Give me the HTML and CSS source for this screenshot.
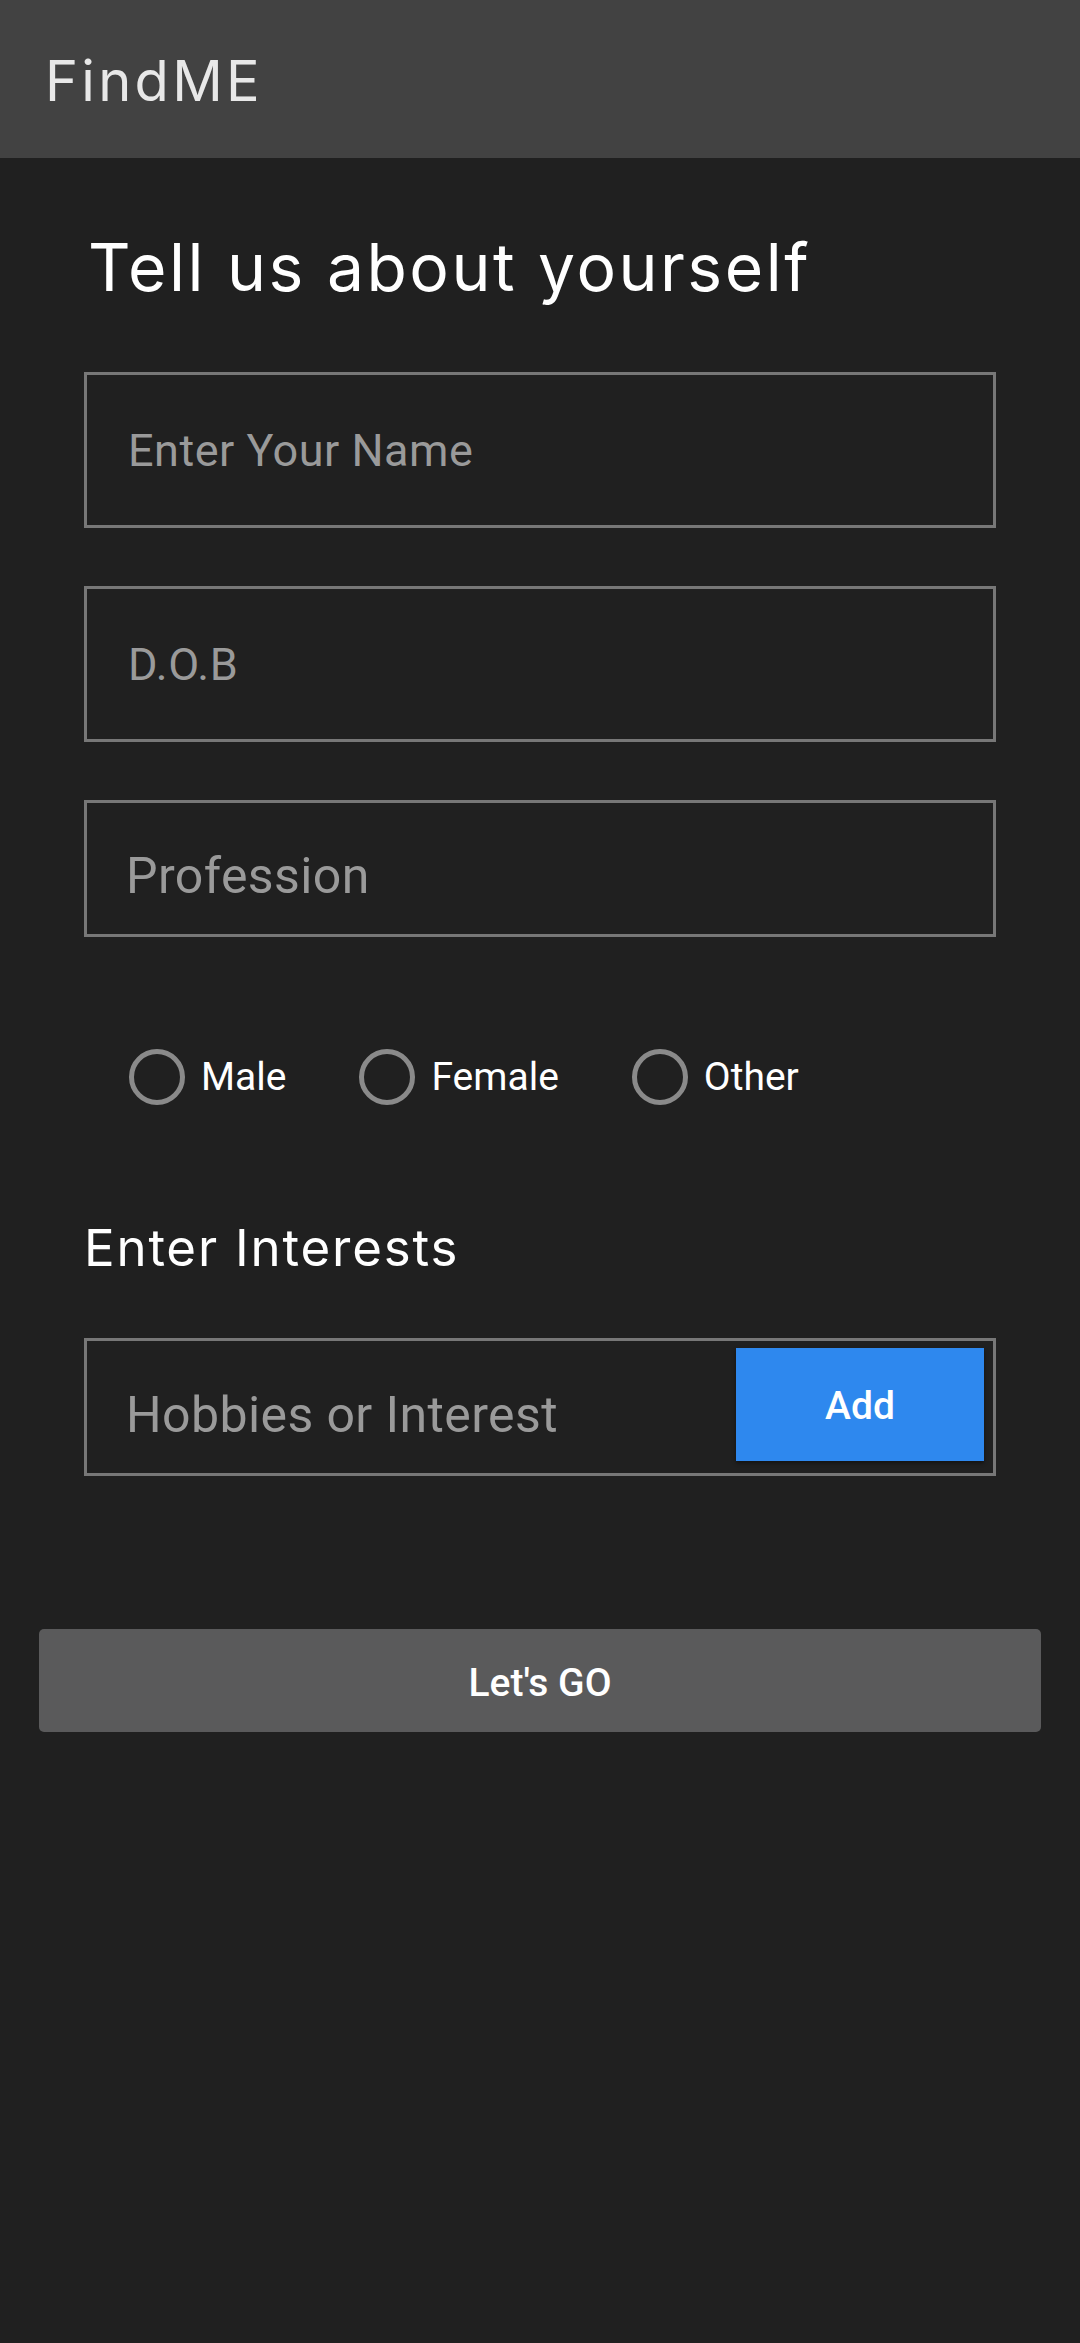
FILE: index.html
```html
<!DOCTYPE html>
<html lang="en">
<head>
<meta charset="utf-8">
<title>FindME</title>
<link rel="stylesheet" href="styles.css">
</head>
<body>
<header class="appbar">
  <div class="brand">FindME</div>
</header>
<main class="content">
  <h1 class="title">Tell us about yourself</h1>
  <div class="field field-tall"><span class="ph ph-sm">Enter Your Name</span></div>
  <div class="field field-tall"><span class="ph ph-sm">D.O.B</span></div>
  <div class="field field-short"><span class="ph ph-lg">Profession</span></div>
  <div class="radios">
    <label class="radio"><span class="ring"></span><span class="rlabel">Male</span></label>
    <label class="radio"><span class="ring"></span><span class="rlabel">Female</span></label>
    <label class="radio"><span class="ring"></span><span class="rlabel">Other</span></label>
  </div>
  <h2 class="subtitle">Enter Interests</h2>
  <div class="field interest">
    <span class="ph ph-lg">Hobbies or Interest</span>
    <button class="add">Add</button>
  </div>
  <button class="go">Let's GO</button>
</main>
</body>
</html>
```

FILE: styles.css
```css
html, body {
  margin: 0;
  padding: 0;
  background: #202020;
}
body {
  font-family: Roboto, "Liberation Sans", sans-serif;
  color: #fff;
  min-height: 2343px;
}
.appbar {
  box-sizing: border-box;
  height: 158px;
  background: #424242;
  padding: 53px 0 0 45px;
}
.brand {
  font-family: Inter, "Noto Sans", sans-serif;
  font-weight: 400;
  font-size: 56px;
  line-height: 56px;
  color: #e8e8e8;
  letter-spacing: 3.3px;
}
.content {
  padding: 0 84px;
  display: flex;
  flex-direction: column;
}
.title {
  margin: 69px 0 0 4px;
  font-family: Inter, "Noto Sans", sans-serif;
  font-weight: 400;
  font-size: 66px;
  line-height: 80px;
  letter-spacing: 2.5px;
  color: #fff;
}
.field {
  box-sizing: border-box;
  border: 3px solid #777;
  display: flex;
  align-items: center;
  margin-top: 58px;
}
.title + .field { margin-top: 65px; }
.field-tall { height: 156px; padding-left: 41px; }
.field-short { height: 137px; padding-left: 39px; padding-top: 14px; }
.ph {
  color: #9a9a9a;
  font-family: Roboto, "Liberation Sans", sans-serif;
}
.ph-sm { font-size: 45px; letter-spacing: 0.5px; }
.ph-lg { font-size: 50px; letter-spacing: 0.4px; }
.radios {
  display: flex;
  gap: 73px;
  height: 56px;
  margin-top: 112px;
  padding-left: 45px;
}
.radio {
  display: flex;
  align-items: center;
  gap: 16px;
}
.ring {
  box-sizing: border-box;
  width: 56px;
  height: 56px;
  border: 5px solid #8a8a8a;
  border-radius: 50%;
}
.rlabel {
  font-size: 39px;
  color: #fff;
}
.subtitle {
  margin: 112px 0 0 0;
  font-family: Inter, "Noto Sans", sans-serif;
  font-weight: 400;
  font-size: 51px;
  line-height: 62px;
  letter-spacing: 1.8px;
  color: #fff;
}
.interest {
  height: 138px;
  margin-top: 59px;
  padding: 0 9px 0 39px;
  justify-content: space-between;
  align-items: flex-start;
}
.interest .ph {
  margin-top: 45px;
}
.add {
  margin-top: 7px;
  width: 248px;
  height: 113px;
  border: none;
  background: #2e88ee;
  color: #fff;
  font-family: Roboto, "Liberation Sans", sans-serif;
  font-weight: 500;
  font-size: 39px;
  box-shadow: 0 2px 4px rgba(0,0,0,0.45);
  padding: 2px 0 0 0;
}
.go {
  margin: 153px -45px 0 -45px;
  height: 103px;
  border: none;
  border-radius: 5px;
  background: #5a5a5b;
  color: #fff;
  font-family: Roboto, "Liberation Sans", sans-serif;
  font-weight: 500;
  font-size: 39px;
  padding: 4px 0 0 0;
}
```
